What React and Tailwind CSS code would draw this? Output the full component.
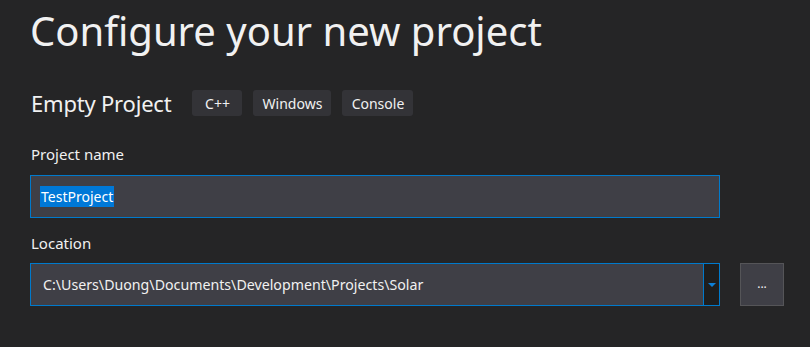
export default function App() {
  return (
    <div
      className="w-[810px] h-[347px] bg-[#252526] text-[#f1f1f1] overflow-hidden pl-[30px]"
      style={{ fontFamily: '"Noto Sans", "Open Sans", sans-serif' }}
    >
      <h1 className="pt-[6px] text-[40px] leading-[50px] text-[#f1f1f1]">
        Configure your new project
      </h1>

      <div className="mt-[34px] flex items-center h-[26px]">
        <span className="text-[22px] leading-[26px] pl-[1px] mr-[21px] tracking-[-0.2px]">Empty Project</span>
        <div className="flex gap-[11px]">
          <span className="h-[26px] w-[50px] flex items-center justify-center rounded-[3px] bg-[#333337] text-[14px]">
            C++
          </span>
          <span className="h-[26px] w-[78px] flex items-center justify-center rounded-[3px] bg-[#333337] text-[14px]">
            Windows
          </span>
          <span className="h-[26px] w-[71px] flex items-center justify-center rounded-[3px] bg-[#333337] text-[14px]">
            Console
          </span>
        </div>
      </div>

      <div className="mt-[28px] pl-[1px] text-[15px] leading-[20px]">Project name</div>
      <div className="mt-[11px] w-[690px] h-[43px] border border-[#007acc] bg-[#3f3f46] flex items-center pl-[9px]">
        <span className="bg-[#0078d7] text-white text-[14px] leading-[21px] px-[1px]">TestProject</span>
      </div>

      <div className="mt-[15px] pl-[1px] text-[15px] leading-[20px]">Location</div>
      <div className="mt-[10px] flex">
        <div className="w-[690px] h-[43px] border border-[#007acc] bg-[#3f3f46] flex">
          <div className="flex-1 flex items-center pl-[12px] text-[14.2px]">
            C:\Users\Duong\Documents\Development\Projects\Solar
          </div>
          <div className="w-[16px] border-l border-[#007acc] bg-[#1e1e1e] flex items-center justify-center">
            <svg width="8" height="4" viewBox="0 0 8 4">
              <path d="M0 0h8L4 4z" fill="#0e80d8" />
            </svg>
          </div>
        </div>
        <button className="ml-[20px] w-[44px] h-[43px] border border-[#555558] bg-[#3f3f46] text-[#f1f1f1] text-[12px] leading-none flex items-center justify-center pb-[2px]">
          ...
        </button>
      </div>
    </div>
  );
}
